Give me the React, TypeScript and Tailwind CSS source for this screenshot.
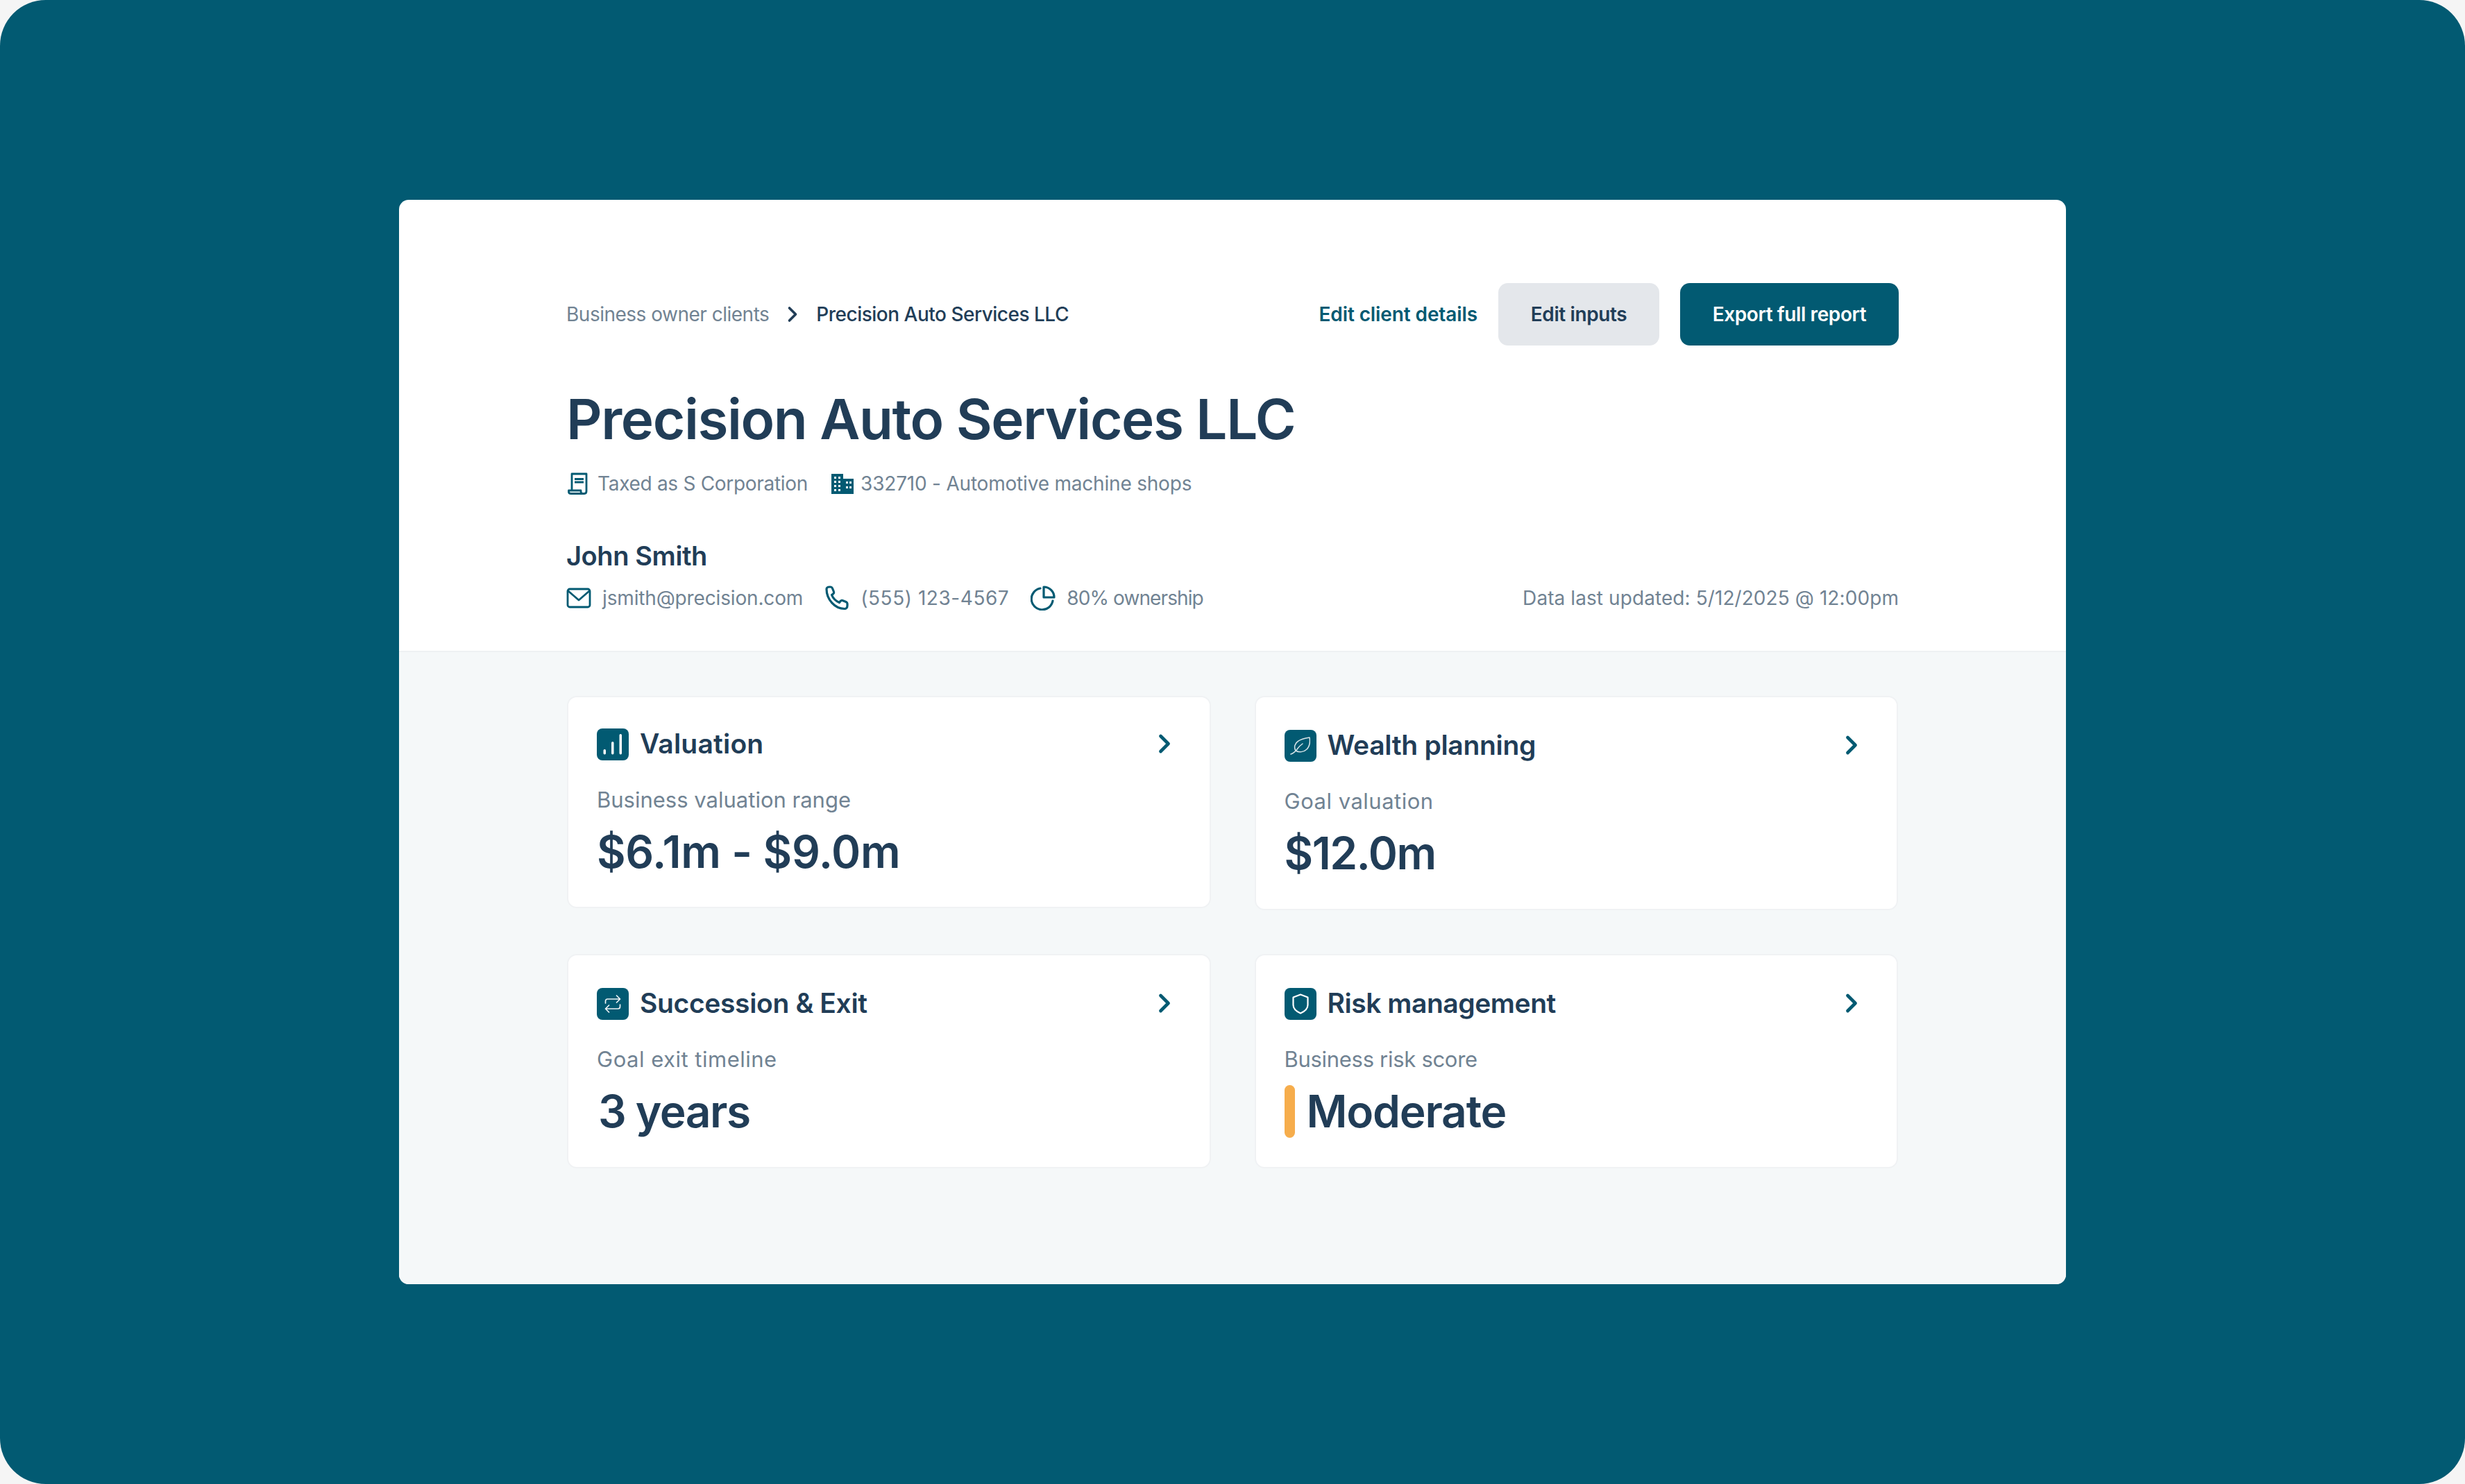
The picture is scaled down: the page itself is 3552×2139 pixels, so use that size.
import React from 'react';
import { ChevronRight } from 'lucide-react';

const font = { fontFamily: 'Inter, "Liberation Sans", sans-serif' };

const ReceiptIcon = () => (
  <svg width="32" height="32" viewBox="0 0 32 32" fill="none" stroke="#025a72" strokeWidth="2.8" strokeLinejoin="round">
    <path d="M8 26V2h21v25c0 2-1 3.500-3 3.500H7c-2 0-3.500-1-3.500-2.500V26H21v1.500c0 1.500 1.500 3 3 3" />
    <path d="M12 9.500h13M12 14h13" />
  </svg>
);

const BuildingIcon = () => (
  <svg width="32" height="32" viewBox="0 0 32 32" fill="#025a72">
    <path fillRule="evenodd" d="M0 2h17v7h15v22H0V2Zm4 4v3h3V6H4Zm6 0v3h3V6h-3Zm-6 6v3h3v-3H4Zm6 0v3h3v-3h-3Zm-6 6v3h3v-3H4Zm6 0v3h3v-3h-3Zm-6 6v3h3v-3H4Zm6 0v3h3v-3h-3Zm11-11v3h3v-3h-3Zm5 0v3h3v-3h-3Zm-5 7v3h3v-3h-3Zm5 0v3h3v-3h-3Z" />
  </svg>
);

const MailIcon = () => (
  <svg width="36" height="30" viewBox="0 0 36 30" fill="none" stroke="#025a72" strokeWidth="2.8" strokeLinejoin="round" strokeLinecap="round">
    <rect x="2" y="2" width="32" height="26" rx="3" />
    <path d="M3 5l15 13L33 5" />
  </svg>
);

const PhoneIcon = () => (
  <svg width="36" height="36" viewBox="0 0 36 36" fill="none" stroke="#025a72" strokeWidth="3.200" strokeLinejoin="round">
    <path d="M3 5c0-2 2-3 4-3h2c1 0 2 1 2.500 2l2 5c.5 1 0 2-1 3l-2 1.500c2 5 6 9 11 11l1.500-2c1-1 2-1.500 3-1l5 2c1 .5 2 1.500 2 2.500v3c0 3-2 4.500-4 4.500C15 33.500 3 20 3 5Z" />
  </svg>
);

const PieIcon = () => (
  <svg width="36" height="36" viewBox="0 0 36 36" fill="none" stroke="#025a72" strokeWidth="3.200" strokeLinejoin="round" strokeLinecap="round">
    <path d="M14 4a15.500 15.500 0 1 0 18 18" />
    <path d="M19 2a15 15 0 0 1 15 15H19V2Z" />
  </svg>
);

const BarsIcon = () => (
  <svg width="46" height="46" viewBox="0 0 46 46" fill="#ffffff">
    <rect x="9.500" y="30" width="3.500" height="7.500" rx="1.700" />
    <rect x="21" y="19" width="3.500" height="18.500" rx="1.700" />
    <rect x="32.500" y="8" width="3.500" height="29.500" rx="1.700" />
  </svg>
);

const LeafIcon = () => (
  <svg width="29" height="26" viewBox="0 0 29 26" fill="none" stroke="#d7e3e7" strokeWidth="1.500" strokeLinecap="round" strokeLinejoin="round">
    <path d="M1 25c3-1 6-3 9-7 2-3 5-6 8-8" />
    <path d="M8 20c-3-5-1-11 4-14 4-3 10-4 16-5 1 6 0 13-4 17-4 4-11 5-16 2Z" />
  </svg>
);

const SwapIcon = () => (
  <svg width="24" height="26" viewBox="0 0 24 26" fill="none" stroke="#eef3f5" strokeWidth="1.700" strokeLinecap="round" strokeLinejoin="round">
    <path d="M1.500 12V9c0-2 1-3 3-3h18M17.500 1l5 5-5 5" />
    <path d="M22.500 14v3c0 2-1 3-3 3h-18M6.500 15l-5 5 5 5" />
  </svg>
);

const ShieldIcon = () => (
  <svg width="24" height="30" viewBox="0 0 24 30" fill="none" stroke="#ffffff" strokeWidth="2.200" strokeLinejoin="round">
    <path d="M12 1.500l10.500 4v11c0 5-5 9.500-10.500 12-5.500-2.500-10.500-7-10.500-12v-11l10.500-4Z" />
  </svg>
);

const Contact: React.FC<{ icon: React.ReactNode; gap: string; className?: string; children: React.ReactNode }> = ({ icon, gap, className, children }) => (
  <div className={`flex items-center ${gap}`}>
    {icon}
    <span className={className}>{children}</span>
  </div>
);

type CardProps = {
  icon: React.ReactNode;
  title: string;
  titleClass: string;
  label: string;
  labelClass: string;
  className: string;
  children: React.ReactNode;
};

const SummaryCard: React.FC<CardProps> = ({ icon, title, titleClass, label, labelClass, className, children }) => (
  <div className={`rounded-[14px] border-2 border-[#f0f2f4] bg-white pr-[43px] pl-[41px] ${className}`}>
    <div className="flex h-[46px] items-center justify-between">
      <div className="flex items-center gap-[16px]">
        <div className="flex h-[46px] w-[46px] items-center justify-center rounded-[8px] bg-[#025a72]">{icon}</div>
        <span className={`pb-[4px] text-[39px] leading-none font-semibold text-[#213d57] ${titleClass}`}>{title}</span>
      </div>
      <ChevronRight size={44} strokeWidth={2.6} color="#025a72" className="mb-[3px]" />
    </div>
    <p className={`mt-[37px] text-[31px] leading-[40px] text-[#718393] ${labelClass}`}>{label}</p>
    {children}
  </div>
);

const valueClass = 'text-[64px] leading-[80px] font-semibold text-[#213d57]';

export default function App() {
  return (
    <div className="bg-[#f5f5f5]">
      <div style={font} className="flex min-h-screen items-center justify-center rounded-[66px] bg-[#025a72]">
        <div className="h-[1563px] w-[2402px] overflow-hidden rounded-[14px] bg-white">
          <header className="h-[652px] border-b-2 border-[#eef1f3] pt-[120px] pr-[241px] pl-[241px]">
            <div className="flex h-[90px] items-center justify-between">
              <nav className="flex items-center text-[28px] tracking-[-0.5px]">
                <span className="text-[#718393]">Business owner clients</span>
                <ChevronRight size={36} strokeWidth={2.4} color="#213d57" className="mx-[16px]" />
                <span className="font-medium text-[#213d57]">Precision Auto Services LLC</span>
              </nav>
              <div className="flex items-center text-[28px] font-semibold tracking-[-0.4px]">
                <span className="mr-[30px] tracking-[-0.1px] text-[#025a72]">Edit client details</span>
                <button className="mr-[30px] h-[90px] w-[232px] rounded-[14px] bg-[#e4e7eb] text-[#213d57]">Edit inputs</button>
                <button className="h-[90px] w-[315px] rounded-[14px] bg-[#025a72] text-white">Export full report</button>
              </div>
            </div>
            <h1 className="mt-[61px] text-[80px] leading-[90px] font-semibold tracking-[-1.4px] text-[#213d57]">Precision Auto Services LLC</h1>
            <div className="mt-[28px] flex h-[40px] items-center text-[28px] text-[#718393]">
              <Contact icon={<ReceiptIcon />} gap="gap-[13px]" className="tracking-[-0.3px]">Taxed as S Corporation</Contact>
              <div className="ml-[34px]">
                <Contact icon={<BuildingIcon />} gap="gap-[10px]" className="tracking-[-0.2px]">332710 - Automotive machine shops</Contact>
              </div>
            </div>
            <h2 className="mt-[59px] text-[38px] leading-[50px] font-semibold tracking-[-0.4px] text-[#213d57]">John Smith</h2>
            <div className="mt-[16px] flex h-[40px] items-center justify-between text-[28px] text-[#718393]">
              <div className="flex items-center gap-[31px]">
                <Contact icon={<MailIcon />} gap="gap-[16px]" className="tracking-[-0.15px]">jsmith@precision.com</Contact>
                <Contact icon={<PhoneIcon />} gap="gap-[16px]" className="tracking-[0.55px]">(555) 123-4567</Contact>
                <Contact icon={<PieIcon />} gap="gap-[16px]" className="tracking-[-0.9px]">80% ownership</Contact>
              </div>
              <span className="tracking-[0.08px]">Data last updated: 5/12/2025 @ 12:00pm</span>
            </div>
          </header>
          <main className="h-[911px] bg-[#f5f8f9] px-[242px] pt-[63px]">
            <div className="grid grid-cols-2 items-start gap-x-[63px] gap-y-[63px]">
              <SummaryCard
                icon={<BarsIcon />}
                title="Valuation"
                titleClass="tracking-[0.2px]"
                label="Business valuation range"
                labelClass="tracking-[0px]"
                className="h-[306px] pt-[45px]"
              >
                <p className={`mt-[15px] tracking-[-0.3px] ${valueClass}`}>$6.1m - $9.0m</p>
              </SummaryCard>
              <SummaryCard
                icon={<LeafIcon />}
                title="Wealth planning"
                titleClass="tracking-[-0.3px]"
                label="Goal valuation"
                labelClass="tracking-[0.5px]"
                className="h-[309px] pt-[47px]"
              >
                <p className={`mt-[15px] tracking-[-1.5px] ${valueClass}`}>$12.0m</p>
              </SummaryCard>
              <SummaryCard
                icon={<SwapIcon />}
                title="Succession & Exit"
                titleClass="tracking-[-0.35px]"
                label="Goal exit timeline"
                labelClass="tracking-[0.5px]"
                className="h-[309px] pt-[47px]"
              >
                <p className={`mt-[15px] pl-[2px] tracking-[-1.5px] ${valueClass}`}>3 years</p>
              </SummaryCard>
              <SummaryCard
                icon={<ShieldIcon />}
                title="Risk management"
                titleClass="tracking-[-0.45px]"
                label="Business risk score"
                labelClass="tracking-[-0.3px]"
                className="h-[309px] pt-[47px]"
              >
                <div className="mt-[15px] flex h-[80px] items-center gap-[17px]">
                  <div className="h-[76px] w-[15px] rounded-full bg-[#f6ad4c]" />
                  <p className={`tracking-[-1.2px] ${valueClass}`}>Moderate</p>
                </div>
              </SummaryCard>
            </div>
          </main>
        </div>
      </div>
    </div>
  );
}
